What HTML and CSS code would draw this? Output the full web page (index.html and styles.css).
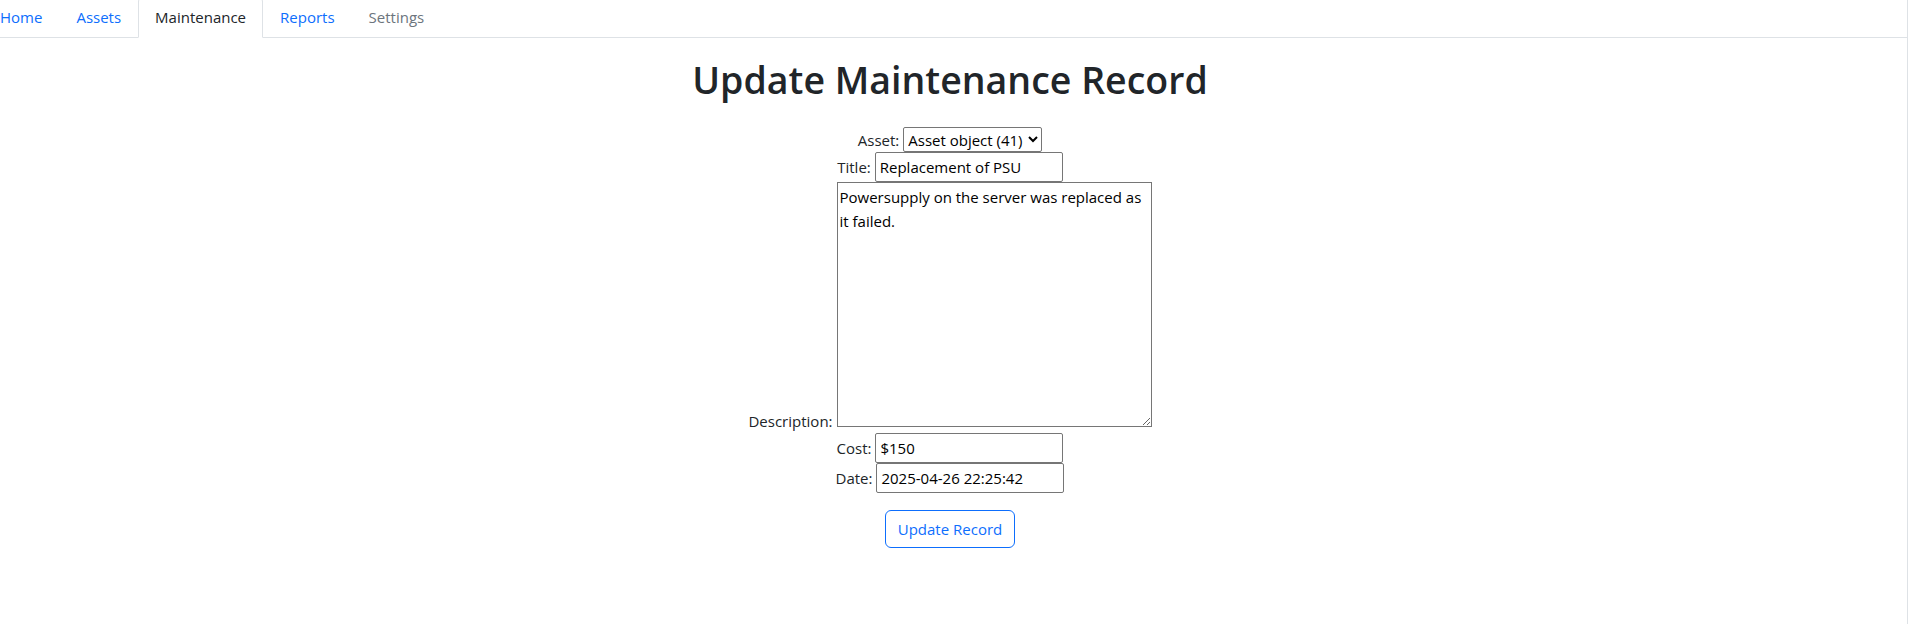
FILE: index.html
```html
<!DOCTYPE html>
<html lang="en">
<head>
<meta charset="utf-8">
<title>Update Maintenance Record</title>
<link rel="stylesheet" href="styles.css">
</head>
<body>
<div class="page">
  <ul class="tabs">
    <li class="tab-item"><a class="tab-link" href="#">Home</a></li>
    <li class="tab-item"><a class="tab-link" href="#">Assets</a></li>
    <li class="tab-item"><a class="tab-link tab-active" href="#">Maintenance</a></li>
    <li class="tab-item"><a class="tab-link" href="#">Reports</a></li>
    <li class="tab-item"><a class="tab-link tab-muted" href="#">Settings</a></li>
  </ul>
  <main class="content">
    <h1 class="page-title">Update Maintenance Record</h1>
    <form class="record-form">
      <div class="field-row">
        <label class="field-label" for="asset">Asset:</label>
        <select class="field-select" id="asset"><option>Asset object (41)</option></select>
      </div>
      <div class="field-row">
        <label class="field-label" for="title">Title:</label>
        <input class="field-input" id="title" type="text" value="Replacement of PSU">
      </div>
      <div class="field-row field-row-bottom">
        <label class="field-label field-label-bottom" for="desc">Description:</label>
        <textarea class="field-textarea" id="desc">Powersupply on the server was replaced as it failed.</textarea>
      </div>
      <div class="field-row">
        <label class="field-label" for="cost">Cost:</label>
        <input class="field-input" id="cost" type="text" value="$150">
      </div>
      <div class="field-row">
        <label class="field-label" for="date">Date:</label>
        <input class="field-input" id="date" type="text" value="2025-04-26 22:25:42">
      </div>
      <div class="actions">
        <button class="btn-outline" type="submit">Update Record</button>
      </div>
    </form>
  </main>
</div>
</body>
</html>
```

FILE: styles.css
```css
*, *::before, *::after {
  box-sizing: border-box;
}

html, body {
  margin: 0;
  padding: 0;
  background: #ffffff;
}

body {
  font-family: "Open Sans", "Noto Sans", sans-serif;
  font-size: 15px;
  line-height: 24px;
  color: #212529;
  overflow: hidden;
}

.page {
  width: 1908px;
  min-height: 628px;
  border-right: 1px solid #dee2e6;
}

.tabs {
  display: flex;
  list-style: none;
  margin: -4px 0 0 -17px;
  padding: 0;
  border-bottom: 1px solid #dee2e6;
}

.tab-item {
  margin-bottom: -1px;
}

.tab-link {
  display: block;
  padding: 8px 16px;
  border: 1px solid transparent;
  border-top-left-radius: 6px;
  border-top-right-radius: 6px;
  color: #0d6efd;
  text-decoration: none;
}

.tab-active {
  color: #212529;
  background: #ffffff;
  border-color: #dee2e6 #dee2e6 #ffffff;
}

.tab-muted {
  color: #6c757d;
}

.content {
  width: 1900px;
}

.page-title {
  margin: 20px 0 0;
  font-size: 37.5px;
  line-height: 44px;
  font-weight: 600;
  text-align: center;
  color: #212529;
}

.record-form {
  display: flex;
  flex-direction: column;
  padding-top: 25px;
}

.field-row {
  display: flex;
  justify-content: center;
  align-items: baseline;
  gap: 4px;
}

.field-row-bottom {
  align-items: flex-end;
  margin-bottom: 6px;
}

.field-label {
  color: #212529;
}

.field-label-bottom {
  margin-bottom: -6px;
}

.field-select {
  width: 139px;
  height: 25px;
  margin: 0;
  font-family: inherit;
  font-size: 15px;
  color: #000000;
  border: 1px solid #767676;
  border-radius: 2px;
  background: #ffffff;
}

.field-input {
  width: 188px;
  margin: 0;
  padding: 2px 4px;
  font-family: inherit;
  font-size: 15px;
  line-height: 24px;
  color: #000000;
  border: 1px solid #767676;
  border-radius: 2px;
  background: #ffffff;
}

.field-textarea {
  width: 315px;
  height: 245px;
  margin: 0;
  padding: 2px;
  font-family: inherit;
  font-size: 15px;
  line-height: 24px;
  color: #000000;
  border: 1px solid #767676;
  border-radius: 0;
  background: #ffffff;
}

.actions {
  display: flex;
  justify-content: center;
  margin-top: 17px;
}

.btn-outline {
  padding: 6px 12px;
  font-family: inherit;
  font-size: 15px;
  line-height: 24px;
  color: #0d6efd;
  background: transparent;
  border: 1px solid #0d6efd;
  border-radius: 6px;
  cursor: pointer;
}
```
